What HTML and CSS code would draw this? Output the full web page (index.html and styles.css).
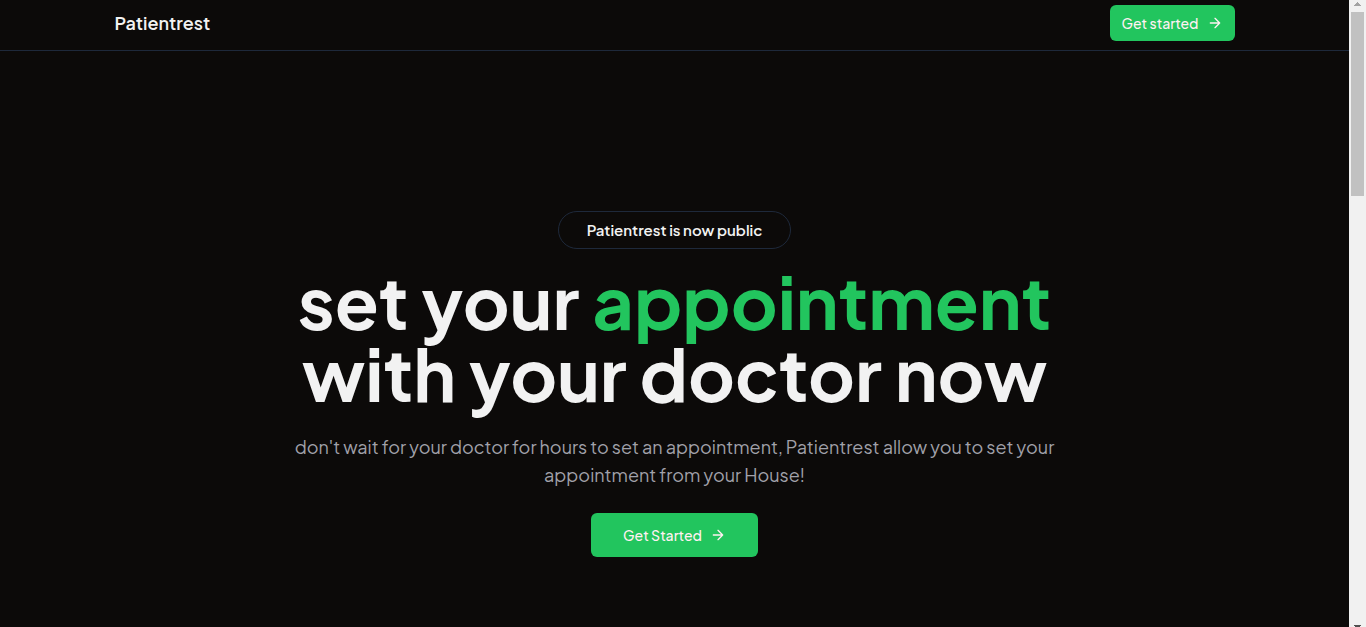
FILE: index.html
```html
<!DOCTYPE html>
<html lang="en">
<head>
<meta charset="utf-8">
<meta name="viewport" content="width=device-width, initial-scale=1">
<title>Patientrest</title>
<link rel="stylesheet" href="styles.css">
</head>
<body>
<div class="page">
  <header class="navbar">
    <div class="container navbar-inner">
      <a class="brand" href="#">Patientrest</a>
      <a class="button button-small" href="#">Get started
        <svg class="arrow" viewBox="0 0 24 24" aria-hidden="true"><path d="M5 12h14M12 5l7 7-7 7"/></svg>
      </a>
    </div>
  </header>
  <main class="container hero">
    <p class="badge">Patientrest is now public</p>
    <h1 class="title">set your <span class="accent">appointment</span><br>with your doctor now</h1>
    <p class="lead">don't wait for your doctor for hours to set an appointment, Patientrest allow you to set your<br>appointment from your House!</p>
    <a class="button button-large" href="#">Get Started
      <svg class="arrow" viewBox="0 0 24 24" aria-hidden="true"><path d="M5 12h14M12 5l7 7-7 7"/></svg>
    </a>
  </main>
</div>
<div class="scrollbar" aria-hidden="true">
  <svg class="scroll-arrow" viewBox="0 0 17 12"><path fill="#a3a3a3" d="M8 2h1v1h1v1h1v1h1v1H5V5h1V4h1V3h1z"/></svg>
  <div class="scroll-thumb"></div>
  <svg class="scroll-arrow scroll-arrow-down" viewBox="0 0 17 2"><path fill="#505050" d="M5 0h7v1h-1v1H6V1H5z"/></svg>
</div>
</body>
</html>
```
FILE: styles.css
```css
* { box-sizing: border-box; }

body {
  margin: 0;
  min-height: 100vh;
  display: grid;
  grid-template-columns: minmax(0, 1fr) 17px;
  background: #0c0a09;
  color: #f2f2f2;
  font-family: "Plus Jakarta Sans", Inter, sans-serif;
}

.container {
  width: 100%;
  max-width: 1280px;
  margin: 0 auto;
  padding: 0 80px;
}

.navbar { border-bottom: 1px solid #1e293b; }

.navbar-inner {
  display: flex;
  align-items: center;
  justify-content: space-between;
  padding-top: 5px;
  padding-bottom: 9px;
}

.brand {
  color: inherit;
  font-size: 18px;
  line-height: 28px;
  font-weight: 600;
  text-decoration: none;
}

.button {
  display: inline-flex;
  align-items: center;
  gap: 8px;
  border-radius: 6px;
  background: #22c55e;
  color: #fff1f2;
  font-size: 14px;
  line-height: 20px;
  font-weight: 500;
  text-decoration: none;
}

.button-small { padding: 8px 12px; }
.button-large { padding: 12px 32px; }

.arrow {
  width: 16px;
  height: 16px;
  fill: none;
  stroke: currentColor;
  stroke-width: 2;
  stroke-linecap: round;
  stroke-linejoin: round;
}

.hero {
  display: flex;
  flex-direction: column;
  align-items: center;
  padding-top: 160px;
  text-align: center;
}

.badge {
  margin: 0 0 16px;
  padding: 8px 28px;
  border: 1px solid #1e293b;
  border-radius: 999px;
  font-size: 15px;
  line-height: 20px;
  font-weight: 600;
}

.title {
  margin: 0;
  font-size: 72px;
  line-height: 72px;
  font-weight: 700;
}

.accent { color: #22c55e; }

.lead {
  margin: 24px 0;
  color: #a1a1aa;
  font-size: 18px;
  line-height: 28px;
}

.scrollbar {
  display: flex;
  flex-direction: column;
  background: #f1f1f1;
}

.scroll-arrow { display: block; width: 17px; }

.scroll-thumb {
  height: 184px;
  margin: 0 2px;
  background: #c1c1c1;
}

.scroll-arrow-down { margin-top: auto; }
```
